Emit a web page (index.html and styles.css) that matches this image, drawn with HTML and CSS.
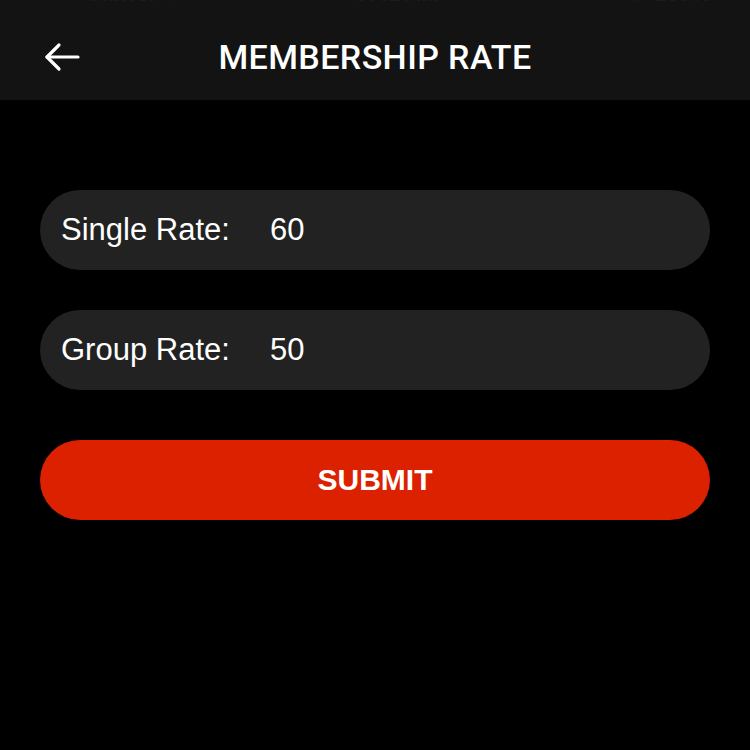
FILE: index.html
```html
<!DOCTYPE html>
<html lang="en">
<head>
<meta charset="utf-8">
<title>Membership Rate</title>
<link rel="stylesheet" href="styles.css">
</head>
<body>
<div class="app">
  <header class="topbar">
    <div class="status">
      <span class="status-left">●●●●○ Carrier ⌔</span>
      <span class="status-mid">9:41 AM</span>
      <span class="status-right">◔ ✈ 100% ▭</span>
    </div>
    <div class="nav">
      <button class="back" aria-label="Back">
        <svg width="36" height="30" viewBox="0 0 36 30" fill="none" stroke="#fff" stroke-width="3.2" stroke-linecap="round" stroke-linejoin="round">
          <path d="M34 15H3"/>
          <path d="M15 3L3 15l12 12"/>
        </svg>
      </button>
      <h1 class="title">MEMBERSHIP RATE</h1>
      <span class="spacer"></span>
    </div>
  </header>
  <main class="content">
    <div class="field">
      <span class="label">Single Rate:</span>
      <span class="value">60</span>
    </div>
    <div class="field">
      <span class="label">Group Rate:</span>
      <span class="value">50</span>
    </div>
    <button class="submit">SUBMIT</button>
  </main>
</div>
</body>
</html>
```
FILE: styles.css
```css
* { box-sizing: border-box; }
html, body {
  margin: 0;
  padding: 0;
  background: #000;
}
body {
  width: 750px;
  height: 750px;
  overflow: hidden;
  font-family: "Liberation Sans", Arial, sans-serif;
  color: #fff;
}
.topbar {
  background: #131313;
  height: 100px;
  display: flex;
  flex-direction: column;
}
.status {
  height: 3px;
  overflow: hidden;
  display: flex;
  justify-content: space-between;
  align-items: flex-end;
  padding: 0 12px;
  font-size: 22px;
  line-height: 18px;
  color: #1c1c1c;
  font-weight: 700;
}
.nav {
  flex: 1;
  display: grid;
  grid-template-columns: 1fr auto 1fr;
  align-items: center;
  padding: 10px 44px 0;
}
.back {
  background: none;
  border: 0;
  padding: 0;
  width: 36px;
  height: 30px;
  display: flex;
  cursor: pointer;
}
.title {
  margin: 0;
  text-align: center;
  font-family: Roboto, "Noto Sans", sans-serif;
  font-weight: 500;
  font-size: 34px;
  line-height: 40px;
  letter-spacing: 0.4px;
}
.content {
  padding: 90px 40px 0;
  display: flex;
  flex-direction: column;
  gap: 40px;
}
.field {
  height: 80px;
  border-radius: 40px;
  background: #222;
  display: flex;
  align-items: center;
  padding-left: 21px;
  font-size: 31px;
}
.label {
  width: 209px;
}
.submit {
  margin-top: 10px;
  height: 80px;
  border: 0;
  border-radius: 40px;
  background: #dc2100;
  color: #fff;
  font-family: "Liberation Sans", Arial, sans-serif;
  font-weight: 700;
  font-size: 30px;
  cursor: pointer;
}
```
